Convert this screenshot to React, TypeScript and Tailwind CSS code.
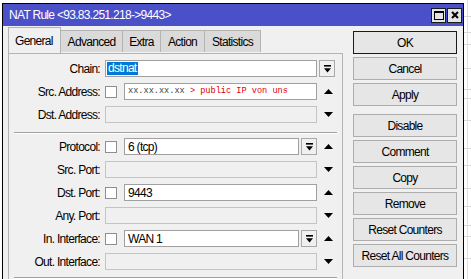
import { FC, ReactNode } from "react"

const Up: FC = () => (
  <svg width="9" height="5" viewBox="0 0 9 5">
    <path d="M0 5L4.5 0L9 5Z" fill="#000" />
  </svg>
)

const Down: FC = () => (
  <svg width="9" height="5" viewBox="0 0 9 5">
    <path d="M0 0L9 0L4.5 5Z" fill="#000" />
  </svg>
)

const DropBtn: FC = () => (
  <div className="w-[16px] h-[17px] border border-[#a8a8a8] bg-[#f0f0f0] flex items-center justify-center">
    <svg width="7" height="8" viewBox="0 0 7 8">
      <rect x="0" y="0" width="7" height="1.6" fill="#000" />
      <path d="M0 3.2L7 3.2L3.5 7.6Z" fill="#000" />
    </svg>
  </div>
)

const Check: FC = () => <div className="w-[12px] h-[12px] border border-[#8f8f8f] bg-white shrink-0" />

const Input: FC<{ w: string; children?: ReactNode; disabled?: boolean }> = ({ w, children, disabled }) => (
  <div
    className={`${w} h-[17px] border flex items-center pl-[3px] overflow-hidden whitespace-nowrap ${
      disabled ? "border-[#c4c4c4] bg-[#f0f0f0]" : "border-[#a0a0a0] bg-white"
    }`}
  >
    {children}
  </div>
)

const Row: FC<{ label: string; children: ReactNode; arrow?: "up" | "down" }> = ({ label, children, arrow }) => (
  <div className="flex items-center h-[17px]">
    <div className="w-[92px] text-right pr-[1px] whitespace-nowrap">{label}</div>
    <div className="ml-[4px] w-[212px] flex items-center">{children}</div>
    <div className="w-[19px] flex justify-end pr-[3px]">{arrow === "up" ? <Up /> : arrow === "down" ? <Down /> : null}</div>
  </div>
)

const Tab: FC<{ label: string; w: string; active?: boolean }> = ({ label, w, active }) =>
  active ? (
    <div className={`${w} h-[26px] -mb-[1px] relative z-10 border-x border-t border-[#b4b4b4] bg-[#f0f0f0] flex items-center pl-[6px]`}>
      {label}
    </div>
  ) : (
    <div className={`${w} h-[22px] mt-[3px] border-t border-r border-[#b4b4b4] bg-[#dadada] flex items-center justify-center`}>
      {label}
    </div>
  )

const Btn: FC<{ label: string; def?: boolean; extra?: string }> = ({ label, def, extra }) => (
  <div
    className={`h-[23px] flex items-center justify-center bg-[#e6e6e6] border ${
      def ? "border-[#1a1a1a]" : "border-[#adadad]"
    } ${extra ?? ""}`}
  >
    {label}
  </div>
)

const Sep: FC<{ extra: string }> = ({ extra }) => (
  <div className={`mx-[5px] h-[2px] border-t border-[#a0a0a0] border-b border-b-white ${extra}`} />
)

export default function App() {
  return (
    <div className="w-[471px] h-[279px] bg-white relative overflow-hidden font-['Liberation_Sans',Arial,sans-serif] text-[12px] tracking-[-0.7px] text-black">
      {/* background app behind the window */}
      <div className="absolute right-0 top-0 w-[7px] h-full flex flex-col">
        {[16, 32, 44, 68, 89, 98, 120, 148, 165, 188, 206, 225, 236, 258].map((y) => (
          <div key={y} className="absolute left-0 w-full h-px bg-[#d8d8d8]" style={{ top: y }} />
        ))}
        <div className="absolute left-[3px] top-0 w-px h-full bg-[#e2e2e2]" />
      </div>

      <div className="ml-[2px] mt-[3px] w-[462px] h-[276px] border-x border-t border-black flex flex-col">
        {/* title bar */}
        <div className="h-[23px] bg-[#4a50c8] flex items-center pl-[6px] pr-[1px]">
          <span className="text-white flex-1">NAT Rule &lt;93.83.251.218-&gt;9443&gt;</span>
          <div className="flex gap-[1px]">
            <div className="w-[15px] h-[15px] bg-[#e4e4e4] border border-[#1a1a1a] flex items-center justify-center">
              <svg width="10" height="9" viewBox="0 0 10 9">
                <rect x="0.5" y="1" width="9" height="7.5" fill="none" stroke="#000" />
                <rect x="0" y="0" width="10" height="2" fill="#000" />
              </svg>
            </div>
            <div className="w-[15px] h-[15px] bg-[#e4e4e4] border border-[#1a1a1a] flex items-center justify-center">
              <svg width="8" height="8" viewBox="0 0 8 8">
                <path d="M1 1L7 7M7 1L1 7" stroke="#000" strokeWidth="2" />
              </svg>
            </div>
          </div>
        </div>

        {/* body */}
        <div className="flex-1 flex bg-[#f0f0f0] pl-[5px]">
          <div className="w-[335px] flex flex-col pt-[1px]">
            <div className="flex items-start h-[26px]">
              <Tab label="General" w="w-[53px]" active />
              <Tab label="Advanced" w="w-[62px]" />
              <Tab label="Extra" w="w-[38px]" />
              <Tab label="Action" w="w-[44px]" />
              <Tab label="Statistics" w="w-[56px]" />
            </div>
            <div className="flex-1 border-x border-t border-[#b4b4b4] bg-[#f0f0f0] flex flex-col pt-[6px]">
              <div className="flex flex-col gap-[6px]">
                <div className="flex items-center h-[17px]">
                  <div className="w-[92px] text-right pr-[1px]">Chain:</div>
                  <div className="ml-[4px] flex items-center gap-[2px]">
                    <div className="w-[212px] h-[17px] border border-[#a0a0a0] bg-white flex items-center pl-[1px]">
                      <span className="bg-[#0078d7] text-white px-[1px] leading-[13px]">dstnat</span>
                    </div>
                    <DropBtn />
                  </div>
                </div>
                <Row label="Src. Address:" arrow="up">
                  <Check />
                  <div className="ml-[7px]">
                    <Input w="w-[193px]">
                      <span className="font-['Liberation_Mono',monospace] text-[8.6px] tracking-normal">
                        <span className="text-[#404040]">xx.xx.xx.xx</span>
                        <span className="text-[#e00000]"> &gt; public IP von uns</span>
                      </span>
                    </Input>
                  </div>
                </Row>
                <Row label="Dst. Address:" arrow="down">
                  <Input w="w-[212px]" disabled />
                </Row>
              </div>

              <Sep extra="mt-[9px]" />

              <div className="flex flex-col gap-[6px] mt-[4px]">
                <Row label="Protocol:" arrow="up">
                  <Check />
                  <div className="ml-[7px] flex items-center gap-[2px]">
                    <Input w="w-[175px]">6 (tcp)</Input>
                    <DropBtn />
                  </div>
                </Row>
                <Row label="Src. Port:" arrow="down">
                  <Input w="w-[212px]" disabled />
                </Row>
                <Row label="Dst. Port:" arrow="up">
                  <Check />
                  <div className="ml-[7px]">
                    <Input w="w-[193px]">9443</Input>
                  </div>
                </Row>
                <Row label="Any. Port:" arrow="down">
                  <Input w="w-[212px]" disabled />
                </Row>
                <Row label="In. Interface:" arrow="up">
                  <Check />
                  <div className="ml-[7px] flex items-center gap-[2px]">
                    <Input w="w-[175px]">WAN 1</Input>
                    <DropBtn />
                  </div>
                </Row>
                <Row label="Out. Interface:" arrow="down">
                  <Input w="w-[212px]" disabled />
                </Row>
              </div>

              <Sep extra="mt-[7px]" />
            </div>
          </div>

          <div className="ml-[10px] w-[104px] pt-[5px] flex flex-col gap-[3px]">
            <Btn label="OK" def />
            <Btn label="Cancel" />
            <Btn label="Apply" />
            <Btn label="Disable" extra="mt-[5px]" />
            <Btn label="Comment" />
            <Btn label="Copy" />
            <Btn label="Remove" />
            <Btn label="Reset Counters" />
            <Btn label="Reset All Counters" />
          </div>
        </div>
      </div>
    </div>
  )
}
